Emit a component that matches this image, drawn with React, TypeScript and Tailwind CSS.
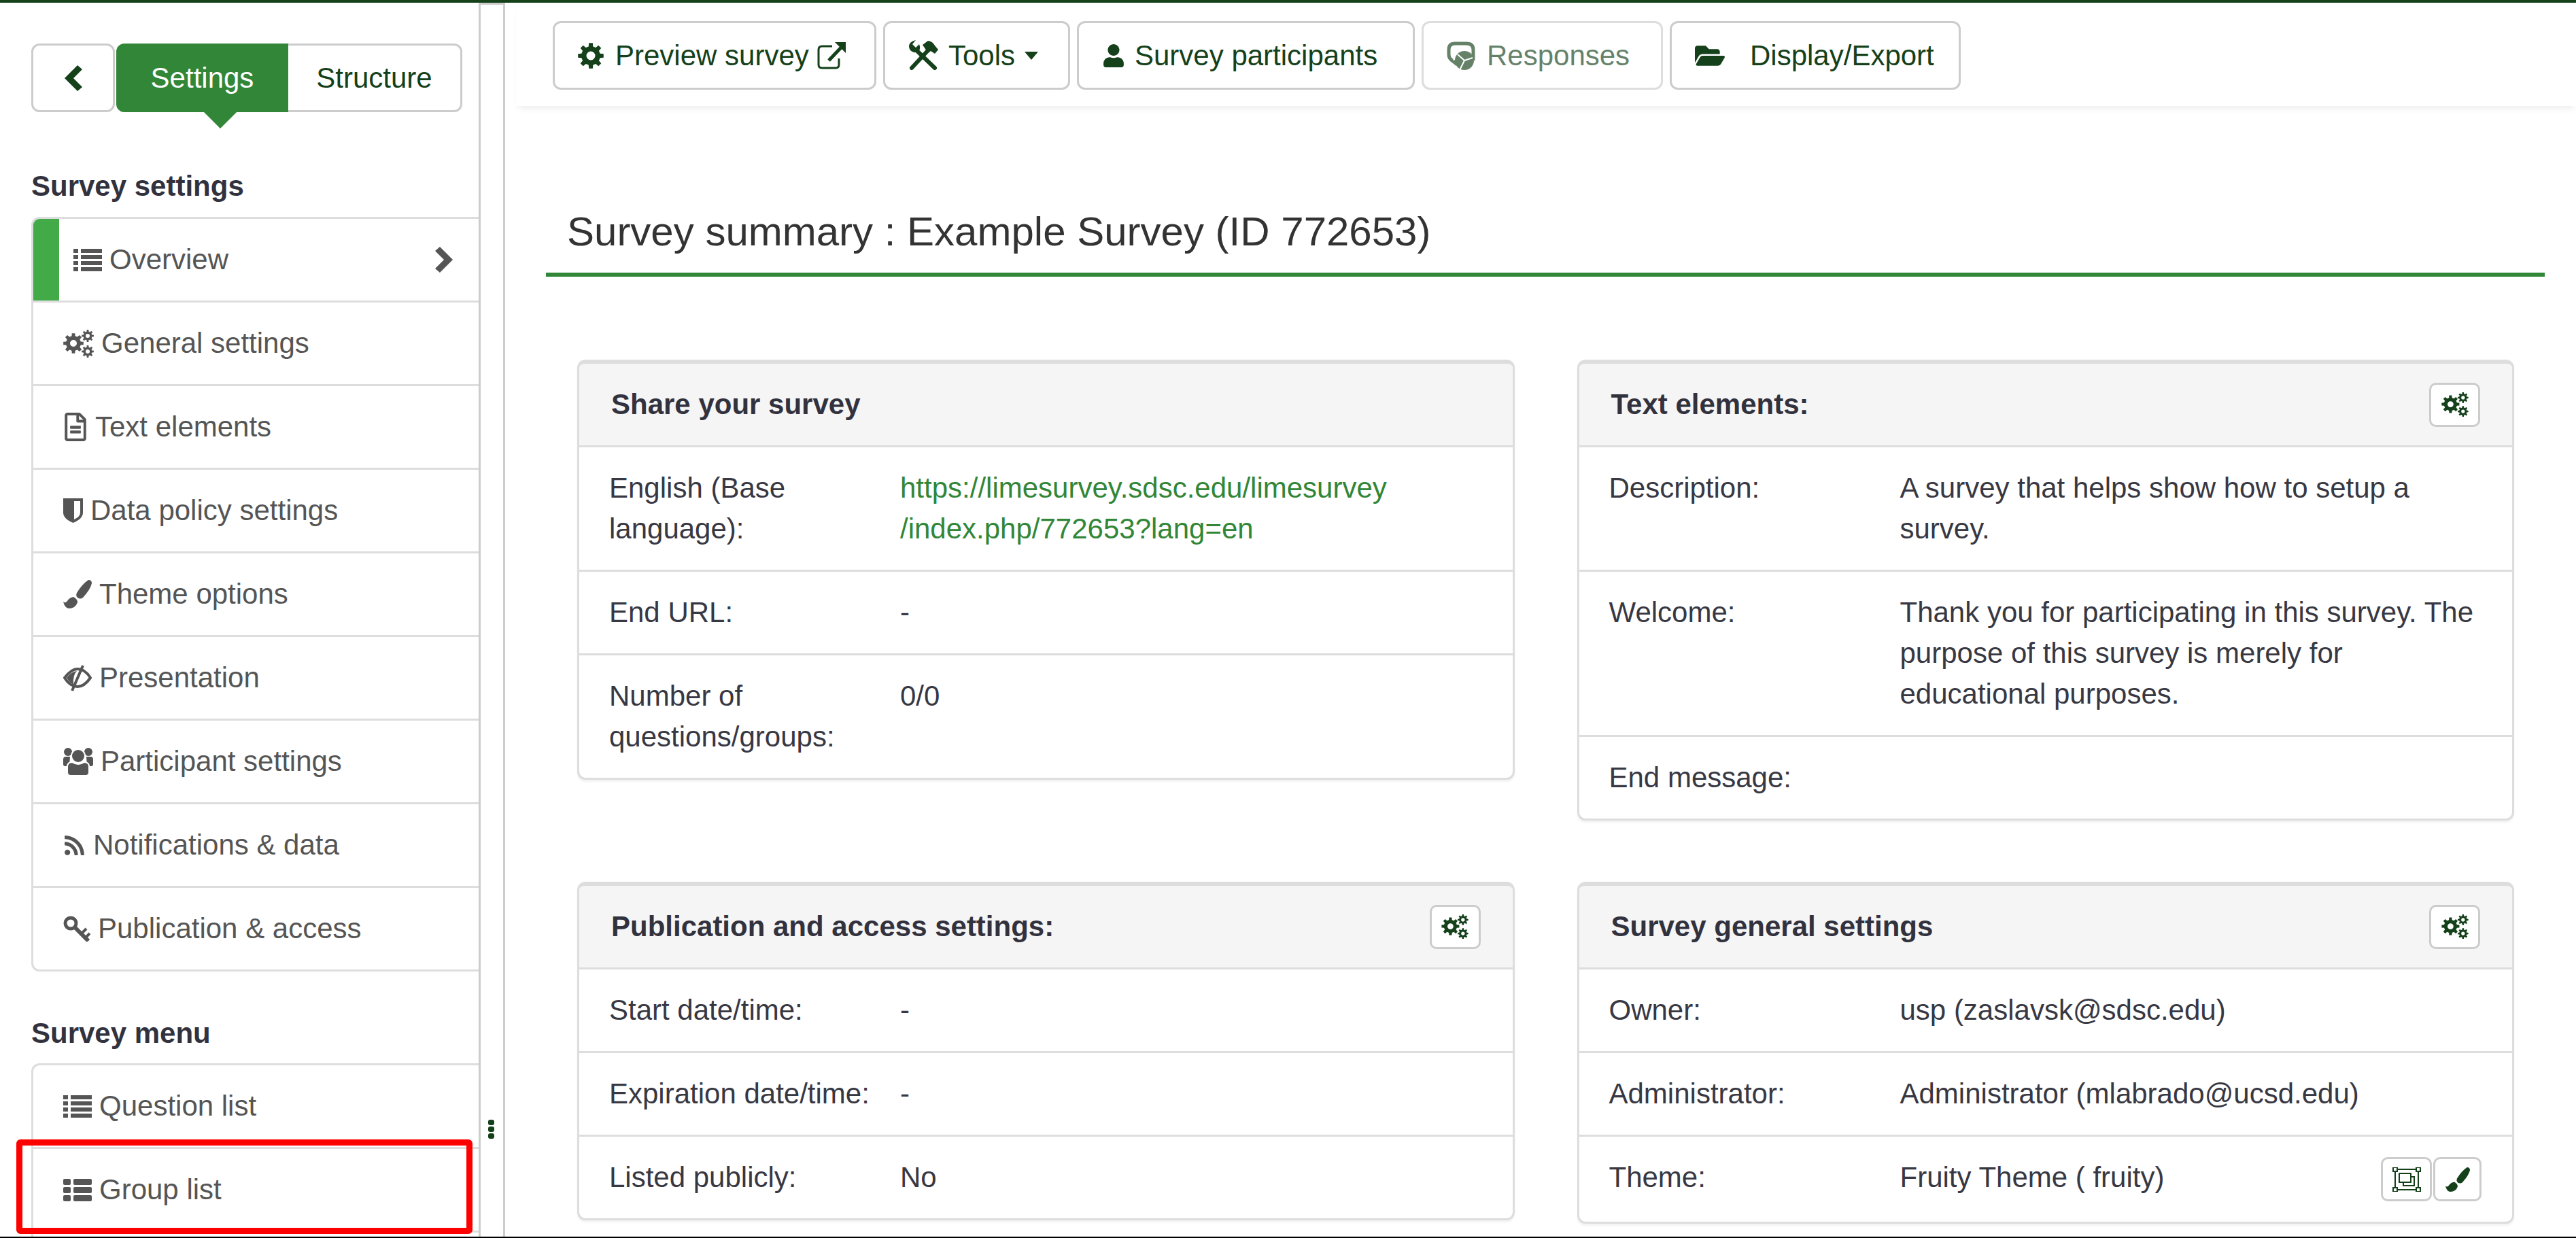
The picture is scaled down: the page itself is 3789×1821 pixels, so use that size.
import React from "react"
import { FaFolderOpen, FaRegFileAlt, FaRss, FaUser } from "react-icons/fa"

// gear outline with a round hole, drawn with fill-rule evenodd
function gearPath(cx: number, cy: number, outer: number, inner: number, hole: number, teeth = 8) {
  const step = (Math.PI * 2) / teeth
  const pts: string[] = []
  for (let i = 0; i < teeth; i++) {
    const a = i * step
    const w = step * 0.24
    const at = (r: number, t: number) =>
      `${(cx + r * Math.cos(t)).toFixed(2)} ${(cy + r * Math.sin(t)).toFixed(2)}`
    pts.push(at(inner, a - w * 1.25), at(outer, a - w * 0.8), at(outer, a + w * 0.8), at(inner, a + w * 1.25))
  }
  return `M${pts.join("L")}Z M${cx - hole} ${cy}a${hole} ${hole} 0 1 0 ${hole * 2} 0a${hole} ${hole} 0 1 0 ${-hole * 2} 0Z`
}

function GearIcon({ size = 38 }: { size?: number }) {
  return (
    <svg width={size} height={size} viewBox="0 0 38 38" fill="currentColor" fillRule="evenodd" className="shrink-0">
      <path d={gearPath(19, 19, 19, 14, 6.5)} />
    </svg>
  )
}

function CogsIcon({ width = 45, height = 41 }: { width?: number; height?: number }) {
  return (
    <svg width={width} height={height} viewBox="0 0 45 41" fill="currentColor" fillRule="evenodd" className="shrink-0">
      <path d={gearPath(15, 20, 15, 11, 5)} />
      <path d={gearPath(36, 9, 9, 6.5, 3)} />
      <path d={gearPath(36, 32, 9, 6.5, 3)} />
    </svg>
  )
}

function ListIcon() {
  return (
    <svg width="42" height="33" viewBox="0 0 42 33" fill="currentColor" className="shrink-0">
      {[0, 9, 18, 27].map((y) => (
        <g key={y}>
          <rect x="0" y={y} width="7" height="6" />
          <rect x="11" y={y} width="31" height="6" />
        </g>
      ))}
    </svg>
  )
}

function GroupIcon() {
  return (
    <svg width="42" height="33" viewBox="0 0 42 33" fill="currentColor" className="shrink-0">
      {[0, 12, 24].map((y) => (
        <g key={y}>
          <rect x="0" y={y} width="11" height="9" rx="2" />
          <rect x="15" y={y} width="27" height="9" rx="2" />
        </g>
      ))}
    </svg>
  )
}

function ShieldIcon() {
  return (
    <svg width="29" height="36" viewBox="0 0 29 36" fill="currentColor" className="shrink-0">
      <path d="M0 0H29V21Q29 30 14.5 36Q0 30 0 21Z" />
      <path d="M16 4H25V21Q25 27 16 31Z" fill="#fff" />
    </svg>
  )
}

function BrushIcon({ size = 42 }: { size?: number }) {
  return (
    <svg width={size} height={size} viewBox="0 0 42 42" fill="currentColor" className="shrink-0">
      <path d="M37 0Q42 0 42 5Q40 14 29 26Q25 29 21 26Q18 23 20 19Q27 7 37 0Z" />
      <path d="M15 25Q21 28 21 33Q18 42 8 42Q2 41 0 32Q3 35 6 31Q9 26 15 25Z" />
    </svg>
  )
}

function EyeSlashIcon() {
  return (
    <svg width="42" height="40" viewBox="0 0 42 40" className="shrink-0">
      <path d="M2 20Q12 7 21 7Q32 7 40 20Q31 33 21 33Q10 33 2 20Z" fill="none" stroke="currentColor" strokeWidth="4" />
      <path d="M5 20Q12 11 20 10Q14 16 15 30Q9 27 5 20Z" fill="currentColor" />
      <path d="M13 39L29 2" stroke="currentColor" strokeWidth="4" fill="none" />
    </svg>
  )
}

function KeyIcon() {
  return (
    <svg width="40" height="38" viewBox="0 0 40 38" fill="none" stroke="currentColor" className="shrink-0">
      <circle cx="11" cy="11" r="8" strokeWidth="5" />
      <path d="M17 17L37 37" strokeWidth="6" />
      <path d="M27 26L34 19M33 32L39 26" strokeWidth="4" />
    </svg>
  )
}

function UsersIcon() {
  return (
    <svg width="44" height="41" viewBox="0 0 44 41" fill="currentColor" className="shrink-0">
      <circle cx="7" cy="6" r="6" />
      <circle cx="37" cy="6" r="6" />
      <path d="M0 17Q0 13 4 13H10L9 27H3Q0 27 0 24Z" />
      <path d="M44 17Q44 13 40 13H34L35 27H41Q44 27 44 24Z" />
      <circle cx="22" cy="12" r="10" stroke="#fff" strokeWidth="2" />
      <path d="M6 28Q6 21 13 21Q22 27 31 21Q38 21 38 28V36Q38 41 33 41H11Q6 41 6 36Z" stroke="#fff" strokeWidth="2" />
    </svg>
  )
}

function ExternalIcon() {
  return (
    <svg width="42" height="40" viewBox="0 0 42 40" fill="none" stroke="currentColor" className="shrink-0">
      <path d="M22 6H7Q2 6 2 11V33Q2 38 7 38H27Q32 38 32 33V24" strokeWidth="3" />
      <path d="M17 27L36 7" strokeWidth="5" />
      <path d="M26 0H42V16Z" fill="currentColor" stroke="none" />
    </svg>
  )
}

function ToolsIcon() {
  return (
    <svg width="45" height="45" viewBox="0 0 45 45" fill="currentColor" className="shrink-0">
      <path d="M11 0L6 6L11 11L16 6Q19 14 14 17Q8 20 3 15Q-1 9 3 4Q6 1 11 0Z" />
      <path d="M12 15L39 41" stroke="currentColor" strokeWidth="6" strokeLinecap="round" />
      <path d="M5 41L30 14" stroke="currentColor" strokeWidth="6" strokeLinecap="round" />
      <path d="M21 7L29 1Q36 2 39 8L44 14L39 20L33 16L29 19Z" />
    </svg>
  )
}

function ResponsesIcon() {
  return (
    <svg width="42" height="42" viewBox="0 0 42 42" fill="none" stroke="currentColor" className="shrink-0">
      <path d="M9 28Q3 26 3 19V12Q3 3 12 3H29Q39 3 39 12V28" strokeWidth="5" />
      <path d="M5 29L16 26L14 36Z" fill="currentColor" stroke="none" />
      <circle cx="26" cy="28" r="14" fill="currentColor" stroke="none" />
      <path d="M26 28L16 19M26 28L19 42M26 28L38 24" stroke="#fff" strokeWidth="2" />
    </svg>
  )
}

function UngroupIcon() {
  return (
    <svg width="42" height="36" viewBox="0 0 42 36" fill="none" stroke="currentColor" strokeWidth="2" className="shrink-0">
      <path d="M7 3H35M7 33H35M4 6V30M38 6V30" />
      {[
        [1, 0],
        [35, 0],
        [1, 30],
        [35, 30],
      ].map(([x, y]) => (
        <rect key={`${x}-${y}`} x={x} y={y} width="6" height="6" />
      ))}
      <rect x="10" y="9" width="17" height="13" />
      <path d="M27 14H32V27H16V22" />
    </svg>
  )
}

type RowDef = { label: string; value?: React.ReactNode; actions?: boolean }

const settingsItems = [
  { icon: <CogsIcon />, label: "General settings" },
  { icon: <FaRegFileAlt size={42} className="shrink-0 w-[36px]" />, label: "Text elements" },
  { icon: <ShieldIcon />, label: "Data policy settings" },
  { icon: <BrushIcon />, label: "Theme options" },
  { icon: <EyeSlashIcon />, label: "Presentation" },
  { icon: <UsersIcon />, label: "Participant settings" },
  { icon: <FaRss size={33} className="shrink-0" />, label: "Notifications & data" },
  { icon: <KeyIcon />, label: "Publication & access" },
]

function SideRow({ icon, label }: { icon: React.ReactNode; label: string }) {
  return (
    <div className="h-[123px] pl-[44px] border-b-[3px] border-[#ddd] flex items-center gap-[11px] text-[#555] last:border-b-0 last:h-[120px]">
      {icon}
      <span>{label}</span>
    </div>
  )
}

function ToolButton({
  children,
  className = "",
}: {
  children: React.ReactNode
  className?: string
}) {
  return (
    <div
      className={`h-[101px] pl-[34px] shrink-0 flex items-center border-[3px] border-[#ccc] rounded-[12px] bg-white text-[#14401a] ${className}`}
    >
      {children}
    </div>
  )
}

function SmallButton({ children, className = "" }: { children: React.ReactNode; className?: string }) {
  return (
    <div
      className={`h-[65px] flex items-center justify-center border-[3px] border-[#ccc] rounded-[10px] bg-white text-[#14401a] ${className}`}
    >
      {children}
    </div>
  )
}

function Card({
  title,
  rows,
  hasButton = true,
}: {
  title: string
  rows: RowDef[]
  hasButton?: boolean
}) {
  return (
    <div className="border-[3px] border-t-[6px] border-[#ddd] rounded-[12px] overflow-hidden bg-white shadow-[0_3px_3px_rgba(0,0,0,0.05)]">
      <div className="h-[123px] pl-[47px] pr-[47px] flex items-center justify-between bg-[#f5f5f5] border-b-[3px] border-[#ddd]">
        <span className="font-bold text-[#32323e]">{title}</span>
        {hasButton && (
          <SmallButton className="w-[75px]">
            <CogsIcon width={40} height={36} />
          </SmallButton>
        )}
      </div>
      {rows.map((row) => (
        <div key={row.label} className="flex items-start py-[30px] border-b-[3px] border-[#ddd] last:border-b-0 text-[#383843]">
          <div className="w-[472px] shrink-0 pl-[44px] pr-[40px]">{row.label}</div>
          <div className="flex-1 flex items-start justify-between pr-[45px]">
            <div>{row.value}</div>
            {row.actions && (
              <div className="flex gap-[2px]">
                <SmallButton className="w-[75px]">
                  <UngroupIcon />
                </SmallButton>
                <SmallButton className="w-[71px]">
                  <BrushIcon size={36} />
                </SmallButton>
              </div>
            )}
          </div>
        </div>
      ))}
    </div>
  )
}

export default function App() {
  return (
    <div className="relative w-[3789px] h-[1821px] overflow-hidden bg-white flex flex-col border-b-2 border-black font-['Liberation_Sans',Arial,sans-serif] text-[42px] leading-[60px]">
      <div className="h-1 shrink-0 bg-[#14401a]" />
      <div className="flex flex-1 min-h-0">
        {/* Sidebar */}
        <aside className="w-[707px] shrink-0 pl-[46px] pt-[60px] border-r-[3px] border-[#ccc] overflow-hidden">
          <div className="flex h-[101px]">
            <div className="w-[123px] border-[3px] border-[#ccc] rounded-[12px] flex items-center justify-center text-[#14401a]">
              <svg width="26" height="38" viewBox="0 0 26 38" fill="currentColor">
                <path d="M19 0L26 6L13 19L26 32L19 38L0 19Z" />
              </svg>
            </div>
            <div className="relative w-[253px] ml-[2px] bg-[#328637] text-white rounded-l-[12px] flex items-center justify-center">
              Settings
              <div className="absolute left-[129px] top-full w-0 h-0 border-x-[24px] border-x-transparent border-t-[24px] border-t-[#328637]" />
            </div>
            <div className="w-[256px] border-[3px] border-l-0 border-[#ccc] rounded-r-[12px] flex items-center justify-center text-[#14401a]">
              Structure
            </div>
          </div>

          <h2 className="mt-[79px] font-bold text-[#32323e]">Survey settings</h2>
          <div className="mt-[15px] border-[3px] border-r-0 border-[#ddd] rounded-l-[12px] overflow-hidden">
            <div className="h-[123px] border-b-[3px] border-[#ddd] flex items-center text-[#555]">
              <div className="w-[38px] h-full bg-[#42ab48]" />
              <div className="ml-[21px] flex flex-1 items-center gap-[11px] pr-[38px]">
                <ListIcon />
                <span className="flex-1">Overview</span>
                <svg width="26" height="38" viewBox="0 0 26 38" fill="currentColor">
                  <path d="M7 0L0 6L13 19L0 32L7 38L26 19Z" />
                </svg>
              </div>
            </div>
            {settingsItems.map((item) => (
              <SideRow key={item.label} icon={item.icon} label={item.label} />
            ))}
          </div>

          <h2 className="mt-[61px] font-bold text-[#32323e]">Survey menu</h2>
          <div className="mt-[14px] border-[3px] border-r-0 border-[#ddd] rounded-l-[12px] overflow-hidden">
            <SideRow icon={<ListIcon />} label="Question list" />
            <SideRow icon={<GroupIcon />} label="Group list" />
            <div className="h-[123px]" />
          </div>
        </aside>

        {/* Drag handle */}
        <div className="w-[36px] shrink-0 border-t-[3px] border-r-[3px] border-[#ccc] pt-[1640px] pl-[11px] flex flex-col gap-[2px]">
          <div className="w-[9px] h-[8px] rounded-[3px] bg-[#14401a]" />
          <div className="w-[9px] h-[8px] rounded-[3px] bg-[#14401a]" />
          <div className="w-[9px] h-[8px] rounded-[3px] bg-[#14401a]" />
        </div>

        {/* Main */}
        <main className="flex-1 min-w-0">
          <div className="ml-[16px] h-[152px] pt-[27px] pl-[54px] flex gap-[10px] shadow-[0_8px_10px_-4px_rgba(0,0,0,0.07)]">
            <ToolButton className="w-[476px]">
              <GearIcon />
              <span className="ml-[17px]">Preview survey</span>
              <span className="ml-[12px]">
                <ExternalIcon />
              </span>
            </ToolButton>
            <ToolButton className="w-[275px]">
              <ToolsIcon />
              <span className="ml-[14px]">Tools</span>
              <div className="ml-[14px] w-0 h-0 border-x-[10px] border-x-transparent border-t-[12px] border-t-[#14401a]" />
            </ToolButton>
            <ToolButton className="w-[497px]">
              <FaUser size={34} className="shrink-0" />
              <span className="ml-[14px]">Survey participants</span>
            </ToolButton>
            <ToolButton className="w-[355px] opacity-65">
              <ResponsesIcon />
              <span className="ml-[17px]">Responses</span>
            </ToolButton>
            <ToolButton className="w-[428px]">
              <FaFolderOpen size={44} className="shrink-0" />
              <span className="ml-[37px]">Display/Export</span>
            </ToolButton>
          </div>

          <div className="ml-[60px] mr-[46px] mt-[152px] pl-[31px] pb-[27px] border-b-[6px] border-[#328637] text-[60px] leading-[66px] text-[#333]">
            Survey summary : Example Survey (ID 772653)
          </div>

          <div className="ml-[106px] mr-[91px] mt-[122px] grid grid-cols-2 gap-x-[92px] gap-y-[90px] items-start">
            <Card
              title="Share your survey"
              hasButton={false}
              rows={[
                {
                  label: "English (Base language):",
                  value: (
                    <span className="text-[#328637]">
                      https://limesurvey.sdsc.edu/limesurvey
                      <br />
                      /index.php/772653?lang=en
                    </span>
                  ),
                },
                { label: "End URL:", value: "-" },
                { label: "Number of questions/groups:", value: "0/0" },
              ]}
            />
            <Card
              title="Text elements:"
              rows={[
                { label: "Description:", value: "A survey that helps show how to setup a survey." },
                {
                  label: "Welcome:",
                  value: "Thank you for participating in this survey. The purpose of this survey is merely for educational purposes.",
                },
                { label: "End message:", value: "\u00a0" },
              ]}
            />
            <Card
              title="Publication and access settings:"
              rows={[
                { label: "Start date/time:", value: "-" },
                { label: "Expiration date/time:", value: "-" },
                { label: "Listed publicly:", value: "No" },
              ]}
            />
            <Card
              title="Survey general settings"
              rows={[
                { label: "Owner:", value: "usp (zaslavsk@sdsc.edu)" },
                { label: "Administrator:", value: "Administrator (mlabrado@ucsd.edu)" },
                { label: "Theme:", value: "Fruity Theme ( fruity)", actions: true },
              ]}
            />
          </div>
        </main>
      </div>

      {/* Red annotation around the group list row */}
      <div className="absolute left-[24px] top-[1676px] w-[671px] h-[139px] border-[9px] border-[#f00] rounded-[6px]" />
    </div>
  )
}
